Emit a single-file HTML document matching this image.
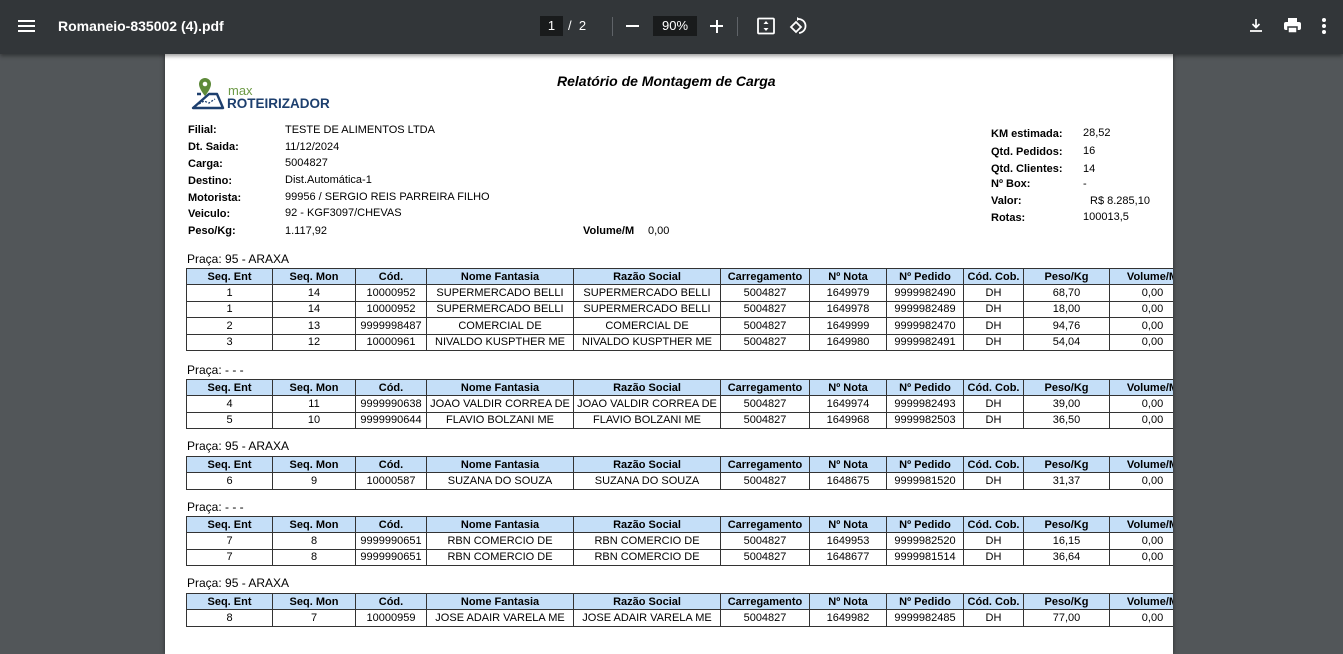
<!DOCTYPE html>
<html><head><meta charset="utf-8">
<style>
*{margin:0;padding:0;box-sizing:border-box}
body{width:1343px;height:633px;overflow:hidden;background:#525659;font-family:"Liberation Sans",Arial,sans-serif;position:relative}
.bar{position:absolute;left:0;top:0;width:1343px;height:54px;background:#323639;box-shadow:0 2px 4px rgba(0,0,0,.4);z-index:2;color:#f1f1f1}
.abs{position:absolute}
.page{position:absolute;left:165px;top:54px;width:1008px;height:600px;background:#fff;overflow:hidden;box-shadow:0 0 4px rgba(0,0,0,.5)}
.lbl{position:absolute;font-size:11px;font-weight:bold;color:#000}
.val{position:absolute;font-size:11px;color:#000}
table{position:absolute;left:21px;width:1009px;min-width:1009px;border-collapse:collapse;table-layout:fixed;font-size:11px;color:#000}
td,th{border:1px solid #333;text-align:center;height:16.5px;padding:0;white-space:nowrap;overflow:hidden;line-height:14px}
th{background:#c5dff8;font-weight:bold;height:16px}
.pr{position:absolute;left:22px;font-size:12px;color:#000}
</style></head><body>
<div class="bar">
  <div class="abs" style="left:18px;top:20px;width:17px;height:2px;background:#fff"></div>
  <div class="abs" style="left:18px;top:25px;width:17px;height:2px;background:#fff"></div>
  <div class="abs" style="left:18px;top:30px;width:17px;height:2px;background:#fff"></div>
  <div class="abs" style="left:58px;top:18px;font-size:14px;font-weight:bold;color:#fff">Romaneio-835002 (4).pdf</div>
  <div class="abs" style="left:540px;top:16px;width:23px;height:20px;background:#191b1c;color:#fff;font-size:13px;text-align:center;line-height:20px">1</div>
  <div class="abs" style="left:568px;top:18px;font-size:13px;color:#fff">/&nbsp; 2</div>
  <div class="abs" style="left:612px;top:17px;width:1px;height:19px;background:#5f6368"></div>
  <div class="abs" style="left:626px;top:25px;width:13px;height:2px;background:#fff"></div>
  <div class="abs" style="left:653px;top:16px;width:44px;height:20px;background:#191b1c;color:#fff;font-size:13px;text-align:center;line-height:20px">90%</div>
  <div class="abs" style="left:710px;top:25px;width:13px;height:2px;background:#fff"></div>
  <div class="abs" style="left:715.5px;top:19.5px;width:2px;height:13px;background:#fff"></div>
  <div class="abs" style="left:737px;top:17px;width:1px;height:19px;background:#5f6368"></div>
  <svg class="abs" style="left:757px;top:17px" width="18" height="18" viewBox="0 0 18 18"><rect x="1" y="1.5" width="16" height="15" rx="1" fill="none" stroke="#fff" stroke-width="1.8"/><path d="M9 4l-2.5 3h5zM9 14l-2.5-3h5z" fill="#fff"/></svg>
  <svg class="abs" style="left:788px;top:16px" width="20" height="20" viewBox="0 0 20 20"><path d="M3 11l5-5 5 5-5 5z" fill="none" stroke="#fff" stroke-width="1.8"/><path d="M10 3a7 7 0 1 1 1 14" fill="none" stroke="#fff" stroke-width="1.8"/><path d="M9 1l3 2-3 2z" fill="#fff"/></svg>
  <svg class="abs" style="left:1248px;top:17px" width="16" height="16" viewBox="0 0 16 16"><path d="M8 2v8M4.5 7L8 10.5 11.5 7M2 14h12" fill="none" stroke="#fff" stroke-width="1.7"/></svg>
  <svg class="abs" style="left:1283px;top:16px" width="19" height="19" viewBox="0 0 19 19"><rect x="5" y="2" width="9" height="4" fill="#fff"/><rect x="1" y="6" width="17" height="8" rx="2" fill="#fff"/><rect x="5" y="11" width="9" height="6" fill="#fff" stroke="#323639" stroke-width="1.5"/></svg>
  <div class="abs" style="left:1322px;top:18px;width:4px;height:4px;border-radius:2px;background:#fff"></div>
  <div class="abs" style="left:1322px;top:24px;width:4px;height:4px;border-radius:2px;background:#fff"></div>
  <div class="abs" style="left:1322px;top:30px;width:4px;height:4px;border-radius:2px;background:#fff"></div>
</div>

<div class="page">
  <svg class="abs" style="left:26px;top:22px" width="36" height="34" viewBox="0 0 36 34">
    <path d="M14 2a6 6 0 0 1 6 6c0 5-6 12-6 12s-6-7-6-12a6 6 0 0 1 6-6z" fill="#5e8a3a"/>
    <circle cx="14" cy="8" r="2.3" fill="#fff"/>
    <path d="M6 18h4M18 18h8l6 14H2z" fill="none" stroke="#1d3f6e" stroke-width="2.4" stroke-linejoin="round"/>
    <path d="M8 28l5-3 5 2 6-4" fill="none" stroke="#1d3f6e" stroke-width="1.3" stroke-dasharray="2 1.5"/>
  </svg>
  <div class="abs" style="left:63px;top:30px;font-size:13px;color:#6d9a46;line-height:13px">max</div>
  <div class="abs" style="left:62px;top:42px;font-size:13.5px;font-weight:bold;color:#1d3f6e;line-height:16px">ROTEIRIZADOR</div>
  <div class="abs" style="left:392px;top:19px;font-size:14px;font-weight:bold;font-style:italic">Relatório de Montagem de Carga</div>

  <div class="lbl" style="left:23px;top:70px">Filial:</div><div class="val" style="left:120px;top:70px">TESTE DE ALIMENTOS LTDA</div>
  <div class="lbl" style="left:23px;top:87px">Dt. Saida:</div><div class="val" style="left:120px;top:87px">11/12/2024</div>
  <div class="lbl" style="left:23px;top:104px">Carga:</div><div class="val" style="left:120px;top:103px">5004827</div>
  <div class="lbl" style="left:23px;top:121px">Destino:</div><div class="val" style="left:120px;top:120px">Dist.Automática-1</div>
  <div class="lbl" style="left:23px;top:138px">Motorista:</div><div class="val" style="left:120px;top:137px">99956 / SERGIO REIS PARREIRA FILHO</div>
  <div class="lbl" style="left:23px;top:154px">Veiculo:</div><div class="val" style="left:120px;top:153px">92 - KGF3097/CHEVAS</div>
  <div class="lbl" style="left:23px;top:171px">Peso/Kg:</div><div class="val" style="left:120px;top:171px">1.117,92</div>
  <div class="lbl" style="left:418px;top:171px">Volume/M</div><div class="val" style="left:483px;top:171px">0,00</div>

  <div class="lbl" style="left:826px;top:74px">KM estimada:</div><div class="val" style="left:918px;top:73px">28,52</div>
  <div class="lbl" style="left:826px;top:92px">Qtd. Pedidos:</div><div class="val" style="left:918px;top:91px">16</div>
  <div class="lbl" style="left:826px;top:109px">Qtd. Clientes:</div><div class="val" style="left:918px;top:109px">14</div>
  <div class="lbl" style="left:826px;top:124px">Nº Box:</div><div class="val" style="left:918px;top:124px">-</div>
  <div class="lbl" style="left:826px;top:141px">Valor:</div><div class="val" style="left:925px;top:141px">R$ 8.285,10</div>
  <div class="lbl" style="left:826px;top:158px">Rotas:</div><div class="val" style="left:918px;top:157px">100013,5</div>

  <div class="pr" style="top:198px">Praça: 95 - ARAXA</div>
  <table style="top:214px">
    <colgroup><col style="width:86px"><col style="width:83px"><col style="width:71px"><col style="width:147px"><col style="width:147px"><col style="width:89px"><col style="width:77px"><col style="width:77px"><col style="width:60px"><col style="width:86px"><col style="width:86px"></colgroup>
    <tr><th>Seq. Ent</th><th>Seq. Mon</th><th>Cód.</th><th>Nome Fantasia</th><th>Razão Social</th><th>Carregamento</th><th>Nº Nota</th><th>Nº Pedido</th><th>Cód. Cob.</th><th>Peso/Kg</th><th>Volume/M</th></tr>
    <tr><td>1</td><td>14</td><td>10000952</td><td>SUPERMERCADO BELLI</td><td>SUPERMERCADO BELLI</td><td>5004827</td><td>1649979</td><td>9999982490</td><td>DH</td><td>68,70</td><td>0,00</td></tr>
    <tr><td>1</td><td>14</td><td>10000952</td><td>SUPERMERCADO BELLI</td><td>SUPERMERCADO BELLI</td><td>5004827</td><td>1649978</td><td>9999982489</td><td>DH</td><td>18,00</td><td>0,00</td></tr>
    <tr><td>2</td><td>13</td><td>9999998487</td><td>COMERCIAL DE</td><td>COMERCIAL DE</td><td>5004827</td><td>1649999</td><td>9999982470</td><td>DH</td><td>94,76</td><td>0,00</td></tr>
    <tr><td>3</td><td>12</td><td>10000961</td><td>NIVALDO KUSPTHER ME</td><td>NIVALDO KUSPTHER ME</td><td>5004827</td><td>1649980</td><td>9999982491</td><td>DH</td><td>54,04</td><td>0,00</td></tr>
  </table>

  <div class="pr" style="top:309px">Praça: - - -</div>
  <table style="top:325px">
    <colgroup><col style="width:86px"><col style="width:83px"><col style="width:71px"><col style="width:147px"><col style="width:147px"><col style="width:89px"><col style="width:77px"><col style="width:77px"><col style="width:60px"><col style="width:86px"><col style="width:86px"></colgroup>
    <tr><th>Seq. Ent</th><th>Seq. Mon</th><th>Cód.</th><th>Nome Fantasia</th><th>Razão Social</th><th>Carregamento</th><th>Nº Nota</th><th>Nº Pedido</th><th>Cód. Cob.</th><th>Peso/Kg</th><th>Volume/M</th></tr>
    <tr><td>4</td><td>11</td><td>9999990638</td><td>JOAO VALDIR CORREA DE</td><td>JOAO VALDIR CORREA DE</td><td>5004827</td><td>1649974</td><td>9999982493</td><td>DH</td><td>39,00</td><td>0,00</td></tr>
    <tr><td>5</td><td>10</td><td>9999990644</td><td>FLAVIO BOLZANI ME</td><td>FLAVIO BOLZANI ME</td><td>5004827</td><td>1649968</td><td>9999982503</td><td>DH</td><td>36,50</td><td>0,00</td></tr>
  </table>

  <div class="pr" style="top:385px">Praça: 95 - ARAXA</div>
  <table style="top:402px">
    <colgroup><col style="width:86px"><col style="width:83px"><col style="width:71px"><col style="width:147px"><col style="width:147px"><col style="width:89px"><col style="width:77px"><col style="width:77px"><col style="width:60px"><col style="width:86px"><col style="width:86px"></colgroup>
    <tr><th>Seq. Ent</th><th>Seq. Mon</th><th>Cód.</th><th>Nome Fantasia</th><th>Razão Social</th><th>Carregamento</th><th>Nº Nota</th><th>Nº Pedido</th><th>Cód. Cob.</th><th>Peso/Kg</th><th>Volume/M</th></tr>
    <tr><td>6</td><td>9</td><td>10000587</td><td>SUZANA DO SOUZA</td><td>SUZANA DO SOUZA</td><td>5004827</td><td>1648675</td><td>9999981520</td><td>DH</td><td>31,37</td><td>0,00</td></tr>
  </table>

  <div class="pr" style="top:446px">Praça: - - -</div>
  <table style="top:462px">
    <colgroup><col style="width:86px"><col style="width:83px"><col style="width:71px"><col style="width:147px"><col style="width:147px"><col style="width:89px"><col style="width:77px"><col style="width:77px"><col style="width:60px"><col style="width:86px"><col style="width:86px"></colgroup>
    <tr><th>Seq. Ent</th><th>Seq. Mon</th><th>Cód.</th><th>Nome Fantasia</th><th>Razão Social</th><th>Carregamento</th><th>Nº Nota</th><th>Nº Pedido</th><th>Cód. Cob.</th><th>Peso/Kg</th><th>Volume/M</th></tr>
    <tr><td>7</td><td>8</td><td>9999990651</td><td>RBN COMERCIO DE</td><td>RBN COMERCIO DE</td><td>5004827</td><td>1649953</td><td>9999982520</td><td>DH</td><td>16,15</td><td>0,00</td></tr>
    <tr><td>7</td><td>8</td><td>9999990651</td><td>RBN COMERCIO DE</td><td>RBN COMERCIO DE</td><td>5004827</td><td>1648677</td><td>9999981514</td><td>DH</td><td>36,64</td><td>0,00</td></tr>
  </table>

  <div class="pr" style="top:522px">Praça: 95 - ARAXA</div>
  <table style="top:539px">
    <colgroup><col style="width:86px"><col style="width:83px"><col style="width:71px"><col style="width:147px"><col style="width:147px"><col style="width:89px"><col style="width:77px"><col style="width:77px"><col style="width:60px"><col style="width:86px"><col style="width:86px"></colgroup>
    <tr><th>Seq. Ent</th><th>Seq. Mon</th><th>Cód.</th><th>Nome Fantasia</th><th>Razão Social</th><th>Carregamento</th><th>Nº Nota</th><th>Nº Pedido</th><th>Cód. Cob.</th><th>Peso/Kg</th><th>Volume/M</th></tr>
    <tr><td>8</td><td>7</td><td>10000959</td><td>JOSE ADAIR VARELA ME</td><td>JOSE ADAIR VARELA ME</td><td>5004827</td><td>1649982</td><td>9999982485</td><td>DH</td><td>77,00</td><td>0,00</td></tr>
  </table>
</div>
</body></html>
